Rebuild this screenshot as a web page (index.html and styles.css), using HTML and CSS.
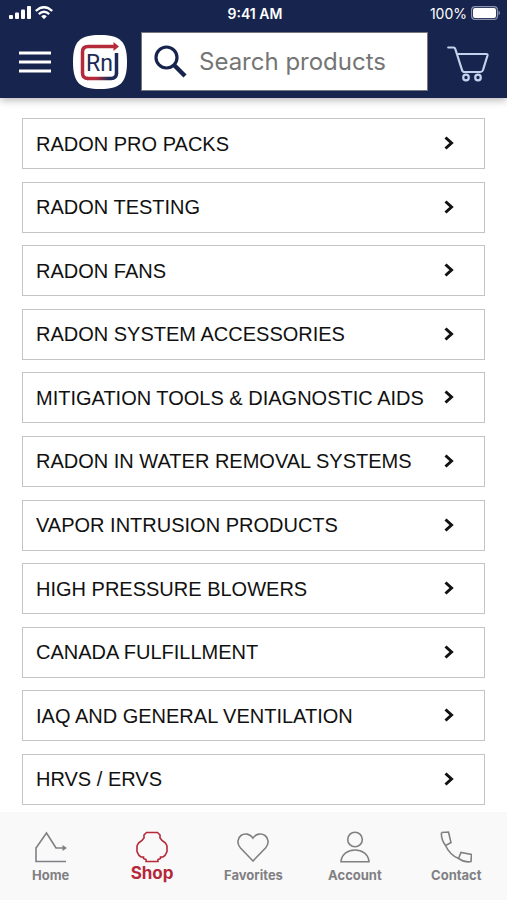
FILE: index.html
```html
<!DOCTYPE html>
<html lang="en">
<head>
<meta charset="utf-8">
<meta name="viewport" content="width=device-width, initial-scale=1">
<title>Shop</title>
<link rel="stylesheet" href="styles.css">
</head>
<body>
<header class="header">
  <div class="status">
    <div class="status-left">
      <svg width="22" height="14" viewBox="0 0 22 14" fill="#fff" aria-hidden="true"><rect x="0" y="9" width="4" height="4" rx="1"/><rect x="6" y="6.500" width="4" height="6.500" rx="1"/><rect x="12" y="3.500" width="4" height="9.500" rx="1"/><rect x="18" y="0" width="4" height="13" rx="1"/></svg>
      <svg width="18" height="14" viewBox="0 0 18 14" fill="none" stroke="#fff" stroke-width="2.300" aria-hidden="true"><path d="M.8 5Q9-2.600 17.200 5M3.800 8.200Q9 3.300 14.200 8.200"/><path d="M6.200 10.300Q9 7.800 11.800 10.300L9 13.200z" fill="#fff" stroke="none"/></svg>
    </div>
    <span class="time">9:41 AM</span>
    <div class="status-right">
      <span>100%</span>
      <svg width="30" height="14" viewBox="0 0 30 14" aria-hidden="true"><rect x=".6" y=".6" width="25.800" height="12.800" rx="3.500" fill="none" stroke="#8c94ab" stroke-width="1.200"/><rect x="2" y="2" width="23" height="10" rx="2" fill="#fff"/><path d="M27.500 4.500q3 2.500 0 5z" fill="#8c94ab"/></svg>
    </div>
  </div>
  <div class="toolbar">
    <button class="icon-button" type="button" aria-label="Menu">
      <svg width="32" height="22" viewBox="0 0 32 22" stroke="#fff" stroke-width="3"><path d="M0 2h32M0 11h32M0 20h32"/></svg>
    </button>
    <a class="logo" href="#" aria-label="Rn home">
      <svg width="54" height="54" viewBox="0 0 54 54" fill="none">
        <defs><linearGradient id="base" x1="0" x2="1"><stop offset=".3" stop-color="#b52a3b"/><stop offset=".75" stop-color="#1c2a55"/></linearGradient></defs>
        <path d="M27 0C47 0 54 6 54 27S47 54 27 54 0 48 0 27 7 0 27 0z" fill="#fff"/>
        <path d="M41 11.500H15Q9.500 11.500 9.500 17V38Q9.500 43.500 15 43.500" stroke="#b52a3b" stroke-width="3.500"/>
        <path d="M14 43.500H38Q43.500 43.500 43.500 38" stroke="url(#base)" stroke-width="3.500"/>
        <path d="M43.500 38.500V18" stroke="#1c2a55" stroke-width="3.500"/>
        <path d="M40.500 7l5.500 4.500-5.500 4.500z" fill="#b52a3b"/>
        <text class="logo-text" x="13" y="36">Rn</text>
      </svg>
    </a>
    <label class="search">
      <svg width="33" height="33" viewBox="0 0 33 33" fill="none" stroke="#17254e" aria-hidden="true"><circle cx="12.500" cy="12.500" r="10.500" stroke-width="3.200"/><path d="M20.500 20.500L31 31" stroke-width="4.400"/></svg>
      <input type="search" placeholder="Search products" aria-label="Search products">
    </label>
    <a class="cart" href="#" aria-label="Cart">
      <svg width="42" height="40" viewBox="0 0 42 40" fill="none" stroke="#c5d2ee" stroke-width="2.200" stroke-linejoin="round" stroke-linecap="round"><path d="M1.200 5.500H6.500Q7.800 5.500 8.300 7L15 28Q15.500 30 17.500 30H33.500Q35.300 30 36 28L40.500 13.500Q40.900 12 39.300 12H10"/><circle cx="19" cy="35.500" r="2.800"/><circle cx="31" cy="35.500" r="2.800"/></svg>
    </a>
  </div>
</header>
<main class="content">
  <ul class="categories">
    <li><a href="#">RADON PRO PACKS<svg class="chevron" viewBox="0 0 10 16"><path d="M1.500 1.500L7.500 7l-6 5.500"/></svg></a></li>
    <li><a href="#">RADON TESTING<svg class="chevron" viewBox="0 0 10 16"><path d="M1.500 1.500L7.500 7l-6 5.500"/></svg></a></li>
    <li><a href="#">RADON FANS<svg class="chevron" viewBox="0 0 10 16"><path d="M1.500 1.500L7.500 7l-6 5.500"/></svg></a></li>
    <li><a href="#">RADON SYSTEM ACCESSORIES<svg class="chevron" viewBox="0 0 10 16"><path d="M1.500 1.500L7.500 7l-6 5.500"/></svg></a></li>
    <li><a href="#">MITIGATION TOOLS &amp; DIAGNOSTIC AIDS<svg class="chevron" viewBox="0 0 10 16"><path d="M1.500 1.500L7.500 7l-6 5.500"/></svg></a></li>
    <li><a href="#">RADON IN WATER REMOVAL SYSTEMS<svg class="chevron" viewBox="0 0 10 16"><path d="M1.500 1.500L7.500 7l-6 5.500"/></svg></a></li>
    <li><a href="#">VAPOR INTRUSION PRODUCTS<svg class="chevron" viewBox="0 0 10 16"><path d="M1.500 1.500L7.500 7l-6 5.500"/></svg></a></li>
    <li><a href="#">HIGH PRESSURE BLOWERS<svg class="chevron" viewBox="0 0 10 16"><path d="M1.500 1.500L7.500 7l-6 5.500"/></svg></a></li>
    <li><a href="#">CANADA FULFILLMENT<svg class="chevron" viewBox="0 0 10 16"><path d="M1.500 1.500L7.500 7l-6 5.500"/></svg></a></li>
    <li><a href="#">IAQ AND GENERAL VENTILATION<svg class="chevron" viewBox="0 0 10 16"><path d="M1.500 1.500L7.500 7l-6 5.500"/></svg></a></li>
    <li><a href="#">HRVS / ERVS<svg class="chevron" viewBox="0 0 10 16"><path d="M1.500 1.500L7.500 7l-6 5.500"/></svg></a></li>
  </ul>
</main>
<nav class="tabs" aria-label="Main">
  <a class="tab" href="#"><svg viewBox="0 0 32 32"><path d="M31 30.500H1V17L11.500 2 21 17H28"/><path d="M27.500 14L32 17l-4.500 3z" fill="currentColor" stroke="none"/></svg>Home</a>
  <a class="tab active" href="#" aria-current="page"><svg viewBox="0 0 32 32"><path d="M10.500 1.500H21.500L24 4V7L26 9.500 29.500 12 31 15V20.500L29 24.500 27 26H24.500V27.500L22 28.500V30.500H10V28.500L7.500 27.500V26H5L3 24.500 1 20.500V15L2.500 12 6 9.500 8 7V4z"/></svg>Shop</a>
  <a class="tab" href="#"><svg viewBox="0 0 32 32"><path d="M16 30L3.500 17C-.5 12.500.5 7 4 4.500S13 2.500 16 7C19 2.500 24.500 2 28 4.500s4.500 8 .5 12.500z"/></svg>Favorites</a>
  <a class="tab" href="#"><svg viewBox="0 0 32 32"><circle cx="16" cy="8.500" r="7.300"/><path d="M2 30.800C3 15 29 15 30 30.800z"/></svg>Account</a>
  <a class="tab" href="#"><svg viewBox="0 0 32 32"><path d="M1.500 1.500L8.500 1 11 11.500 5.500 14.500C8 20 12.500 25 18.500 27.500L21 21.500 31.500 23.500 31 30.500C27 31.500 22 30 18.500 27.500M5.500 14.500C3 11 1 6 1.500 1.500"/></svg>Contact</a>
</nav>
</body>
</html>
```
FILE: styles.css
```css
* {
  box-sizing: border-box;
}

body {
  margin: 0;
  min-height: 100vh;
  display: flex;
  flex-direction: column;
  background: #fff;
  color: #111;
  font-family: "Liberation Sans", Arial, sans-serif;
}

a {
  color: inherit;
  text-decoration: none;
}

svg {
  display: block;
  flex: none;
}

.header {
  padding: 3px 0 7px;
  background: #17254e;
  box-shadow: 0 2px 8px rgba(0, 0, 0, 0.3);
  color: #fff;
  font-family: Inter, sans-serif;
}

.status {
  display: grid;
  grid-template-columns: 1fr auto 1fr;
  align-items: center;
  height: 20px;
  padding: 0 6px 0 9px;
  font-size: 14px;
}

.status-left,
.status-right {
  display: flex;
  align-items: center;
  gap: 4px;
}

.status-right {
  justify-content: flex-end;
}

.time {
  font-weight: 600;
}

.toolbar {
  display: flex;
  align-items: center;
  margin-top: 9px;
  padding: 0 18px 0 19px;
}

.icon-button {
  padding: 0;
  border: 0;
  background: none;
  cursor: pointer;
}

.logo {
  margin: 0 14px 0 22px;
}

.logo-text {
  fill: #1c2a55;
  font-size: 23px;
  font-weight: 400;
  font-family: "Liberation Sans Narrow", Roboto, sans-serif;
}

.search {
  display: flex;
  flex: 1;
  align-items: center;
  gap: 12px;
  min-width: 0;
  height: 59px;
  padding: 0 12px;
  border: 1px solid #75777d;
  background: #fff;
}

.search input {
  flex: 1;
  min-width: 0;
  padding: 0;
  border: 0;
  outline: 0;
  background: none;
  font: 24px Inter, sans-serif;
}

.search input::placeholder {
  color: #757575;
}

.cart {
  margin-left: 19px;
}

.content {
  display: flex;
  flex: 1;
  padding: 20px 22px 7px;
}

.categories {
  display: flex;
  flex: 1;
  flex-direction: column;
  justify-content: space-between;
  gap: 12px;
  margin: 0;
  padding: 0;
  list-style: none;
}

.categories a {
  display: flex;
  align-items: center;
  justify-content: space-between;
  height: 51px;
  padding: 1px 30px 0 13px;
  border: 1px solid #c4c4c4;
  font-size: 20px;
}

.chevron {
  width: 10px;
  height: 16px;
  fill: none;
  stroke: #111;
  stroke-width: 3;
}

.tabs {
  display: grid;
  grid-template-columns: repeat(5, 1fr);
  height: 88px;
  padding-top: 19px;
  background: #f9f9fa;
}

.tab {
  display: flex;
  flex-direction: column;
  align-items: center;
  gap: 3px;
  color: #808083;
  font: bold 13px/18px Inter, sans-serif;
}

.tab svg {
  width: 32px;
  height: 32px;
  fill: none;
  stroke: currentColor;
  stroke-width: 1.6;
}

.active {
  gap: 1px;
  color: #b5283a;
  font-size: 17px;
}
```
